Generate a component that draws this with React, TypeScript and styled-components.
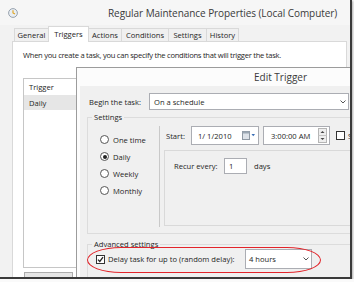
import React from "react";
import styled, { createGlobalStyle } from "styled-components";

const GlobalStyle = createGlobalStyle`
  html, body {
    margin: 0;
    padding: 0;
    background: #fafafa;
  }
  body {
    font-family: "Open Sans", "Noto Sans", sans-serif;
    font-size: 7.6px;
    color: #1e1e1e;
  }
`;

const Frame = styled.div`
  position: relative;
  width: 350px;
  height: 277px;
  overflow: hidden;
  background: #f2f2f2;
  border-right: 2px solid #3a3a3a;
  border-bottom: 2px solid #3a3a3a;
  box-shadow: 1px 1px 2px rgba(0, 0, 0, 0.3);
  display: flex;
  flex-direction: column;
`;

const TitleBar = styled.div`
  height: 25px;
  flex: none;
  display: flex;
  align-items: center;
  padding-left: 8px;
  background: #f6f6f6;
`;

const Title = styled.div`
  margin-left: 90px;
  font-size: 10px;
  letter-spacing: -0.06px;
  color: #3a3a3a;
  white-space: nowrap;
`;

const TabStrip = styled.div`
  height: 16px;
  flex: none;
  display: flex;
  align-items: flex-end;
  padding-left: 14px;
`;

const Tab = styled.div<{ $w: number; $active?: boolean }>`
  position: relative;
  z-index: ${(p) => (p.$active ? 2 : 1)};
  width: ${(p) => p.$w}px;
  height: ${(p) => (p.$active ? 16 : 13)}px;
  margin-bottom: ${(p) => (p.$active ? -1 : 0)}px;
  box-sizing: border-box;
  display: flex;
  align-items: center;
  justify-content: center;
  padding-bottom: ${(p) => (p.$active ? 2 : 0)}px;
  border: 1px solid #d9d9d9;
  border-bottom: none;
  margin-right: -1px;
  background: ${(p) => (p.$active ? "#fff" : "#f0f0f0")};
  white-space: nowrap;
`;

const Panel = styled.div`
  flex: 1;
  margin: 0 3px 0 12px;
  padding: 7px 10px 0;
  background: #fff;
  border: 1px solid #d9d9d9;
  border-bottom: none;
`;

const Description = styled.div`
  line-height: 12px;
  letter-spacing: -0.27px;
  white-space: nowrap;
`;

const TriggerList = styled.div`
  margin-top: 17px;
  width: 110px;
  height: 190px;
  box-sizing: border-box;
  border: 1px solid #c6c6c6;
  background: #fff;
`;

const ListRow = styled.div<{ $selected?: boolean }>`
  height: ${(p) => (p.$selected ? 15 : 16)}px;
  display: flex;
  align-items: center;
  padding-left: 5px;
  background: ${(p) => (p.$selected ? "#e6e6e6" : "transparent")};
`;

const Button = styled.div`
  margin: 4px 0 0 1px;
  width: 49px;
  height: 22px;
  box-sizing: border-box;
  border: 1px solid #acacac;
  background: #e5e5e5;
  display: flex;
  justify-content: center;
  padding-top: 4px;
`;

const Dialog = styled.div`
  position: absolute;
  left: 76px;
  top: 67px;
  width: 300px;
  height: 230px;
  box-sizing: border-box;
  border: 1px solid #9c9c9c;
  padding-left: 3px;
  background: #fcfcfc;
  display: flex;
  flex-direction: column;
`;

const DialogTitle = styled.div`
  height: 18px;
  flex: none;
  display: flex;
  align-items: center;
  padding-left: 174px;
  font-size: 10px;
  color: #3a3a3a;
`;

const Client = styled.div`
  flex: 1;
  background: #f0f0f0;
  padding-top: 7px;
  display: flex;
  flex-direction: column;
`;

const BeginRow = styled.div`
  display: flex;
  align-items: center;
  padding-left: 9px;
`;

const Label = styled.span<{ $w?: number }>`
  width: ${(p) => (p.$w ? `${p.$w}px` : "auto")};
  flex: none;
  white-space: nowrap;
`;

const Field = styled.div<{ $w: number; $h: number; $pad?: number }>`
  width: ${(p) => p.$w}px;
  height: ${(p) => p.$h}px;
  flex: none;
  box-sizing: border-box;
  border: 1px solid #abadb3;
  background: #fff;
  display: flex;
  align-items: center;
  padding: 0 2px 0 ${(p) => p.$pad ?? 4}px;
  white-space: nowrap;
`;

const Grow = styled.span`
  flex: 1;
`;

const Group = styled.fieldset<{ $top: number; $h?: number }>`
  margin: ${(p) => p.$top}px 0 0 7px;
  padding: 0;
  width: 300px;
  height: ${(p) => (p.$h ? `${p.$h}px` : "auto")};
  box-sizing: content-box;
  border: 1px solid #dcdcdc;
  flex: none;
`;

const Legend = styled.legend`
  margin-left: 4px;
  padding: 0 2px;
  line-height: 10px;
  font-size: 7.6px;
`;

const SettingsBody = styled.div`
  display: flex;
  padding: 4px 0 6px;
`;

const RadioColumn = styled.div`
  width: 71px;
  padding: 5px 0 0 12px;
  box-sizing: border-box;
  display: flex;
  flex-direction: column;
`;

const RadioRow = styled.div`
  height: 17px;
  display: flex;
  align-items: center;
  gap: 4px;
`;

const RadioDot = styled.span<{ $on?: boolean }>`
  width: 9px;
  height: 9px;
  box-sizing: border-box;
  border-radius: 50%;
  border: 1px solid #555;
  background: #fff;
  display: flex;
  align-items: center;
  justify-content: center;
  &::after {
    content: "";
    width: 4px;
    height: 4px;
    border-radius: 50%;
    background: ${(p) => (p.$on ? "#222" : "transparent")};
  }
`;

const Separator = styled.div`
  width: 1px;
  height: 101px;
  background: #c9c9c9;
  flex: none;
`;

const RightColumn = styled.div`
  margin-left: 4px;
  display: flex;
  flex-direction: column;
`;

const StartRow = styled.div`
  height: 19px;
  display: flex;
  align-items: center;
  padding-left: 2px;
`;

const Box = styled.span`
  width: 9px;
  height: 9px;
  flex: none;
  box-sizing: border-box;
  border: 1px solid #333;
  background: #fff;
  display: flex;
  align-items: center;
  justify-content: center;
`;

const RecurPanel = styled.div`
  margin-top: 5px;
  width: 220px;
  height: 76px;
  box-sizing: border-box;
  border: 1px solid #d9d9d9;
  padding: 7px 0 0 9px;
`;

const RecurRow = styled.div`
  display: flex;
  align-items: center;
`;

const DelayRow = styled.div`
  display: flex;
  align-items: center;
  height: 20px;
  padding-left: 8px;
`;

const Annotation = styled.div`
  position: absolute;
  left: 87px;
  top: 247px;
  width: 234px;
  height: 26px;
  box-sizing: border-box;
  border: 1.6px solid #e2242a;
  border-radius: 34px / 13px;
  pointer-events: none;
`;

const Chevron = () => (
  <svg width="6" height="4" viewBox="0 0 6 4">
    <path d="M0.5 0.5 L3 3 L5.5 0.5" fill="none" stroke="#555" strokeWidth="1" />
  </svg>
);

const ClockIcon = () => (
  <svg width="10" height="10" viewBox="0 0 10 10">
    <circle cx="5" cy="5" r="4.4" fill="#e9eef3" stroke="#8d99a6" strokeWidth="0.9" />
    <path d="M5 2.2 V5 L7 6" fill="none" stroke="#e0a21b" strokeWidth="1.1" />
  </svg>
);

const CalendarIcon = () => (
  <svg width="14" height="9" viewBox="0 0 14 9">
    <rect x="0.5" y="0.5" width="7" height="8" fill="#dde2e8" stroke="#8f99a3" />
    <rect x="0.5" y="0.5" width="7" height="2" fill="#9aa6b2" />
    <path d="M9.5 3 L13 3 L11.25 5.2 Z" fill="#3b6fb6" />
  </svg>
);

const Spinner = () => (
  <svg width="9" height="15" viewBox="0 0 9 15">
    <rect x="0.5" y="0.5" width="8" height="14" fill="#eeeeee" stroke="#b5b5b5" />
    <line x1="0.5" y1="7.5" x2="8.5" y2="7.5" stroke="#c4c4c4" />
    <path d="M2.5 5 L4.5 3 L6.5 5 Z" fill="#444" />
    <path d="M2.5 10 L4.5 12 L6.5 10 Z" fill="#444" />
  </svg>
);

const Check = () => (
  <svg width="7" height="7" viewBox="0 0 7 7">
    <path d="M1 3.6 L2.8 5.4 L6 1.2" fill="none" stroke="#222" strokeWidth="1.3" />
  </svg>
);

const tabs = [
  { label: "General", w: 35 },
  { label: "Triggers", w: 41, active: true },
  { label: "Actions", w: 34 },
  { label: "Conditions", w: 48 },
  { label: "Settings", w: 39 },
  { label: "History", w: 33 },
];

const schedules = [
  { label: "One time" },
  { label: "Daily", on: true },
  { label: "Weekly" },
  { label: "Monthly" },
];

export default function App() {
  return (
    <>
      <GlobalStyle />
      <Frame>
        <TitleBar>
          <ClockIcon />
          <Title>Regular Maintenance Properties (Local Computer)</Title>
        </TitleBar>

        <TabStrip>
          {tabs.map((t) => (
            <Tab key={t.label} $w={t.w} $active={t.active}>
              {t.label}
            </Tab>
          ))}
        </TabStrip>

        <Panel>
          <Description>
            When you create a task, you can specify the conditions that will trigger the task.
          </Description>
          <TriggerList>
            <ListRow>Trigger</ListRow>
            <ListRow $selected>Daily</ListRow>
          </TriggerList>
          <Button>New...</Button>
        </Panel>

        <Dialog>
          <DialogTitle>Edit Trigger</DialogTitle>
          <Client>
            <BeginRow>
              <Label $w={60}>Begin the task:</Label>
              <Field $w={200} $h={17} $pad={4}>
                <Grow>On a schedule</Grow>
                <Chevron />
              </Field>
            </BeginRow>

            <Group $top={2}>
              <Legend>Settings</Legend>
              <SettingsBody>
                <RadioColumn>
                  {schedules.map((s) => (
                    <RadioRow key={s.label}>
                      <RadioDot $on={s.on} />
                      {s.label}
                    </RadioRow>
                  ))}
                </RadioColumn>
                <Separator />
                <RightColumn>
                  <StartRow>
                    <Label $w={25}>Start:</Label>
                    <Field $w={68} $h={19} $pad={6}>
                      <Grow>1/ 1/2010</Grow>
                      <CalendarIcon />
                    </Field>
                    <Field $w={67} $h={19} $pad={7} style={{ marginLeft: 4 }}>
                      <Grow>3:00:00 AM</Grow>
                      <Spinner />
                    </Field>
                    <Box style={{ marginLeft: 6 }} />
                    <Label style={{ marginLeft: 3 }}>Synchronize across time zones</Label>
                  </StartRow>
                  <RecurPanel>
                    <RecurRow>
                      <Label $w={50}>Recur every:</Label>
                      <Field $w={23} $h={16} $pad={4}>
                        1
                      </Field>
                      <Label style={{ marginLeft: 7 }}>days</Label>
                    </RecurRow>
                  </RecurPanel>
                </RightColumn>
              </SettingsBody>
            </Group>

            <Group $top={5} $h={60}>
              <Legend>Advanced settings</Legend>
              <DelayRow>
                <Box>
                  <Check />
                </Box>
                <Label $w={137} style={{ paddingLeft: 3 }}>
                  Delay task for up to (random delay):
                </Label>
                <Field $w={67} $h={20} $pad={3}>
                  <Grow>4 hours</Grow>
                  <Chevron />
                </Field>
              </DelayRow>
            </Group>
          </Client>
        </Dialog>

        <Annotation />
      </Frame>
    </>
  );
}
